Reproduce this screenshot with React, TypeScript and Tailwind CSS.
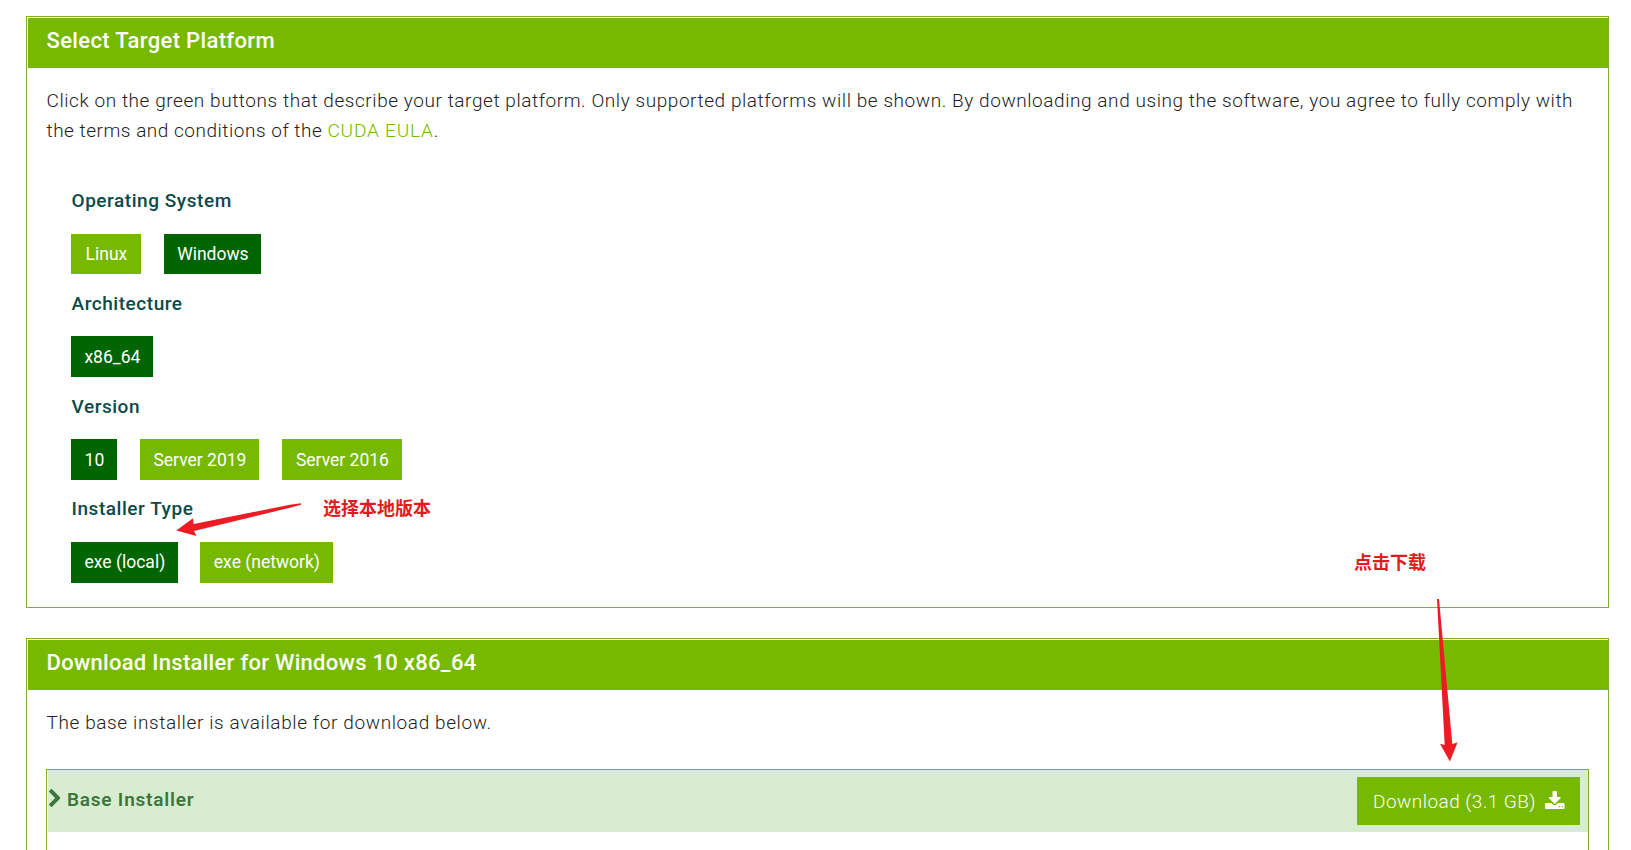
import type { ReactNode } from 'react';

type Option = { label: string; width: string; selected?: boolean };

function ChevronIcon({ className }: { className: string }) {
  return (
    <svg className={className} viewBox="90 -192 1036 1612" fill="currentColor">
      <path d="M1107 659l-742 742c-25 25-65 25-90 0l-166-166c-25-25-25-65 0-90l531-531-531-531c-25-25-25-65 0-90l166-166c25-25 65-25 90 0l742 742c25 25 25 65 0 90z" />
    </svg>
  );
}

function DownloadIcon({ className }: { className: string }) {
  return (
    <svg className={className} viewBox="0 0 1664 1536" fill="currentColor">
      <path d="M1280 1344c0-35-29-64-64-64s-64 29-64 64 29 64 64 64 64-29 64-64zm256 0c0-35-29-64-64-64s-64 29-64 64 29 64 64 64 64-29 64-64zm128-224v320c0 53-43 96-96 96h-1472c-53 0-96-43-96-96v-320c0-53 43-96 96-96h465l135 136c37 36 85 56 136 56s99-20 136-56l136-136h464c53 0 96 43 96 96zm-325-569c10 24 5 52-14 70l-448 448c-12 13-29 19-45 19s-33-6-45-19l-448-448c-19-18-24-46-14-70 10-23 33-39 59-39h256v-448c0-35 29-64 64-64h256c35 0 64 29 64 64v448h256c26 0 49 16 59 39z" />
    </svg>
  );
}

function Panel({ title, titleClass, className, children }: { title: string; titleClass: string; className: string; children: ReactNode }) {
  return (
    <section className={`border border-[#7cb02c] pl-px pt-px ${className}`}>
      <h2 className={`h-[50px] bg-[#76b900] text-[22px] leading-[45px] font-medium text-white ${titleClass}`}>{title}</h2>
      {children}
    </section>
  );
}

function OptionGroup({ label, options, gap = 'gap-[23px]' }: { label: string; options: Option[]; gap?: string }) {
  return (
    <div className="h-[102.8px]">
      <h3 className="h-[46.6px] pl-[0.5px] text-[19px] leading-[28px] font-medium tracking-[0.55px] text-[#0c4a48]">{label}</h3>
      <div className={`flex ${gap}`}>
        {options.map((o) => (
          <button
            key={o.label}
            className={`flex h-[40.8px] justify-center pt-[0.4px] pl-[0.8px] text-[17.5px] leading-[41px] whitespace-nowrap text-white ${o.width} ${o.selected ? 'bg-[#006400]' : 'bg-[#76b900]'}`}
          >
            {o.label}
          </button>
        ))}
      </div>
    </div>
  );
}

export default function App() {
  return (
    <div className="relative h-[850px] overflow-hidden bg-white pt-4 pr-[22px] pl-[26px] font-['Roboto','Noto_Sans_CJK_SC',sans-serif]">
      <Panel title="Select Target Platform" titleClass="pl-[18.5px] tracking-[0.35px]" className="h-[592px]">
        <p className="h-[111px] pt-[18px] pr-[18px] pl-[18.5px] text-[19px] leading-[30px] font-light tracking-[0.565px] text-[#222]">
          Click on the green buttons that describe your target platform. Only supported platforms will be shown. By downloading and using the software, you agree to fully comply with <span className="tracking-[0.52px]">the terms and conditions of the </span><a className="tracking-[0.8px] text-[#76b900]">CUDA EULA</a>.
        </p>
        <div className="pt-[8px] pl-[43px]">
          <OptionGroup
            label="Operating System"
            options={[
              { label: 'Linux', width: 'w-[70px]' },
              { label: 'Windows', width: 'w-[97px]', selected: true },
            ]}
          />
          <OptionGroup label="Architecture" options={[{ label: 'x86_64', width: 'w-[82px]', selected: true }]} />
          <OptionGroup
            label="Version"
            options={[
              { label: '10', width: 'w-[46px]', selected: true },
              { label: 'Server 2019', width: 'w-[119px]' },
              { label: 'Server 2016', width: 'w-[120px]' },
            ]}
          />
          <OptionGroup
            label="Installer Type"
            gap="gap-[22px]"
            options={[
              { label: 'exe (local)', width: 'w-[107px]', selected: true },
              { label: 'exe (network)', width: 'w-[133px]' },
            ]}
          />
        </div>
      </Panel>

      <Panel title="Download Installer for Windows 10 x86_64" titleClass="pl-[18.5px] tracking-[0.285px]" className="mt-[30px] h-[260px]">
        <p className="h-[79px] pt-[18px] pl-[18.5px] text-[19px] leading-[30px] font-light tracking-[0.61px] text-[#222]">
          The base installer is available for download below.
        </p>
        <div className="mr-[19px] ml-[18px] h-[100px] border border-[#7cb02c] pl-px">
          <div className="flex h-[62px] items-start justify-between bg-[#d8ecd0] pt-[7px] pr-[8px]">
            <div className="flex items-center pt-[6px] text-[#3c763d]">
              <ChevronIcon className="mb-[4px] ml-[0.5px] h-[18px] w-[11.6px]" />
              <span className="ml-[6.8px] text-[19px] leading-[34px] font-semibold tracking-[0.8px]">Base Installer</span>
            </div>
            <button className="flex h-12 w-[223px] items-center bg-[#76b900] pl-[16px] text-[19px] font-light tracking-[0.45px] whitespace-nowrap text-white">
              <span className="pt-[2px]">Download (3.1 GB)</span>
              <DownloadIcon className="mb-[3px] ml-[9px] h-[18px] w-[19.5px]" />
            </button>
          </div>
        </div>
      </Panel>

      <span className="absolute top-[500px] left-[323px] text-[18px] leading-[18px] font-bold text-[#e01b22]">选择本地版本</span>
      <span className="absolute top-[554px] left-[1354px] text-[18px] leading-[18px] font-bold text-[#e01b22]">点击下载</span>
      <svg className="pointer-events-none absolute top-0 left-0 h-[850px] w-[1631px]" viewBox="0 0 1631 850" fill="#ed1c24">
        <path d="M176.3 530.5 L193 518.3 L193.7 524 L290 504.8 L301 503.2 L301 504.8 L290 507.7 L194 531 L196.5 536 Z" />
        <path d="M1449.9 761.5 L1440 743.8 L1444.7 745 L1437 599 L1439 599 L1452.3 744 L1457.5 742.5 Z" />
      </svg>
    </div>
  );
}
